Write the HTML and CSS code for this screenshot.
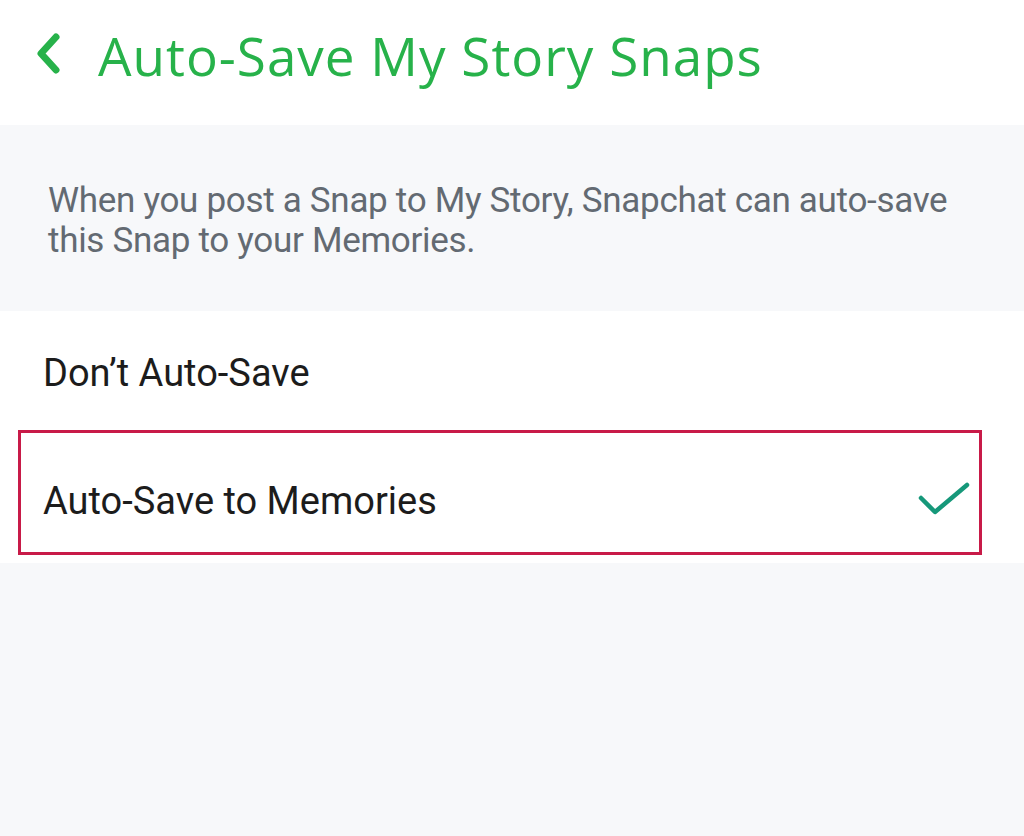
FILE: index.html
```html
<!DOCTYPE HTML>
<html>
<head>
	<title>Auto-Save My Story Snaps</title>
	<meta name="viewport" content="width=device-width">
	<link rel="stylesheet" href="styles.css">
</head>
<body>
	<div class="header">
		<svg class="back" width="28" height="42" viewBox="0 0 28 42">
			<path d="M22 4 L7 20.5 L22 37" fill="none" stroke="#27b24a" stroke-width="7" stroke-linecap="round" stroke-linejoin="round"/>
		</svg>
		<h1>Auto-Save My Story Snaps</h1>
	</div>
	<div class="desc">
		When you post a Snap to My Story, Snapchat can auto&#8209;save this Snap to your Memories.
	</div>
	<div class="options">
		<div class="option">Don’t Auto-Save</div>
		<div class="option selected">
			<span>Auto-Save to Memories</span>
			<svg class="check" width="54" height="36" viewBox="0 0 54 36">
				<path d="M4 17 L18 31 L50 4" fill="none" stroke="#16987a" stroke-width="4.5" stroke-linecap="round" stroke-linejoin="round"/>
			</svg>
		</div>
	</div>
</body>
</html>
```

FILE: styles.css
```css
/* base */
* {
	font-family: "Roboto", "Liberation Sans", sans-serif;
}
body {
	margin: 0;
	background-color: #f7f8fa;
}
/* header */
.header {
	background-color: white;
	height: 125px;
	display: flex;
	align-items: center;
	padding-left: 34px;
	box-sizing: border-box;
}
.back {
	margin-right: 36px;
	margin-top: -17px;
}
.header h1 {
	font-family: "Open Sans", sans-serif;
	font-weight: 400;
	font-size: 53px;
	color: #27b24a;
	margin: 0 0 14px 0;
	letter-spacing: 1px;
}
/* description */
.desc {
	color: #636a72;
	font-size: 35px;
	line-height: 40px;
	letter-spacing: -0.3px;
	padding: 56px 60px 0 48px;
	height: 186px;
	box-sizing: border-box;
}
/* option list */
.options {
	background-color: white;
	padding-bottom: 8px;
}
.option {
	color: #1c1c1c;
	font-size: 38px;
	height: 119px;
	display: flex;
	align-items: center;
	padding-left: 43px;
	padding-top: 4px;
	box-sizing: border-box;
}
.selected {
	border: 3px solid #c81a48;
	margin: 0 42px 0 18px;
	padding: 16px 8px 0 22px;
	height: 125px;
	justify-content: space-between;
}
.check {
	margin-bottom: 4px;
}
```
